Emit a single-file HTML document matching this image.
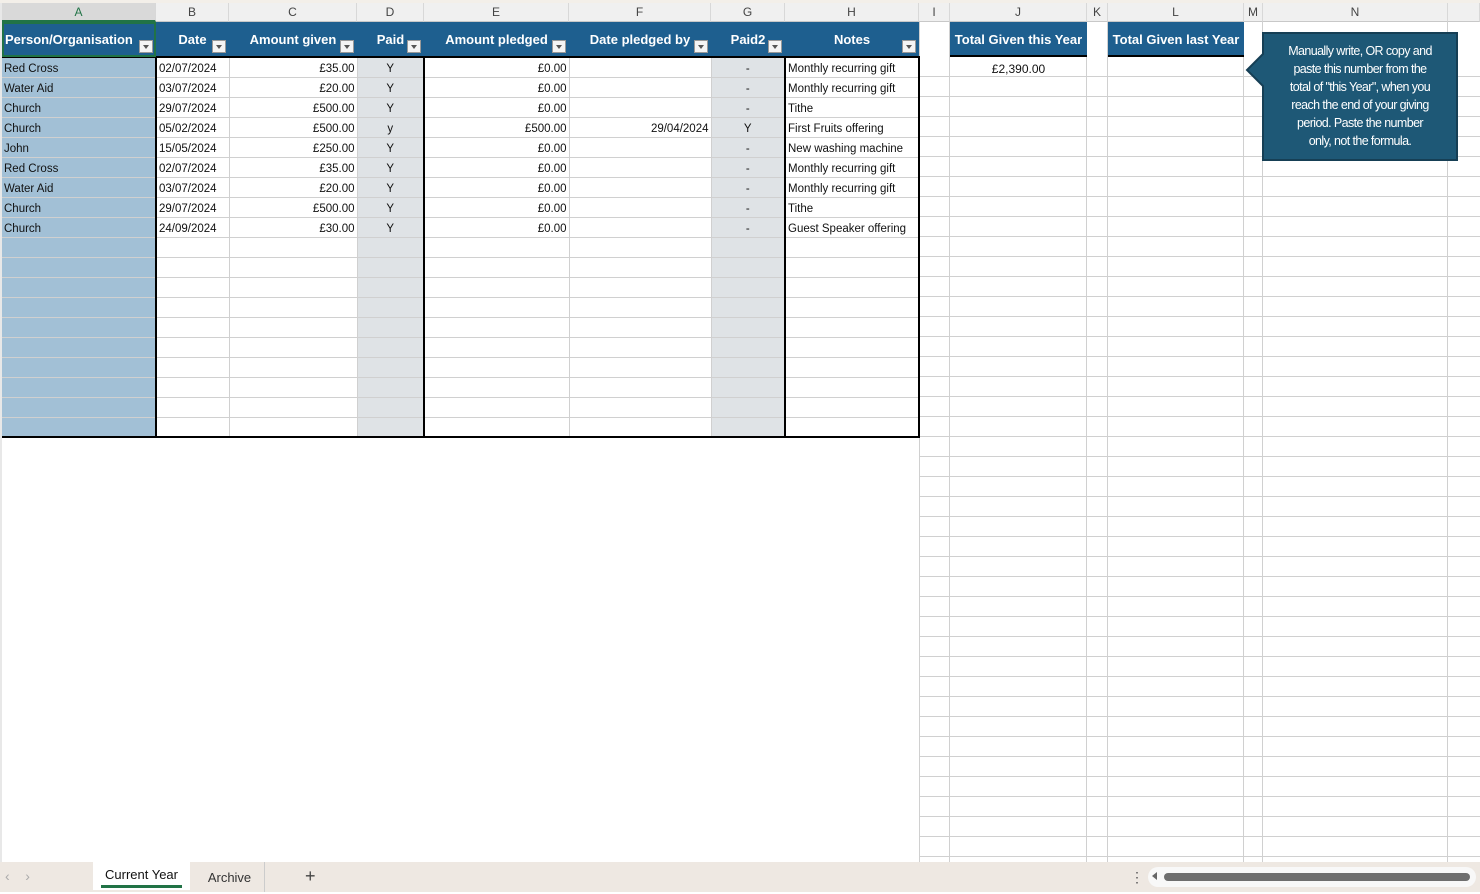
<!DOCTYPE html><html><head><style>
*{margin:0;padding:0;box-sizing:border-box}
body{width:1480px;height:892px;overflow:hidden;background:#fff;font-family:"Liberation Sans",sans-serif;position:relative}
.ab{position:absolute}
.colhdr{top:3px;height:19px;background:#f0f0f0;border-bottom:1px solid #c8c8c8;font-size:12px;color:#444;text-align:center;line-height:19px;border-right:1px solid #d8d8d8}
table{position:absolute;left:2px;top:22px;border-collapse:collapse;table-layout:fixed;font-size:11.5px;color:#111}
td{height:20px;border-bottom:1px solid #d0d0d0;border-right:1px solid #d0d0d0;padding:0 2px;white-space:nowrap;overflow:hidden;line-height:16px;vertical-align:bottom}
th{height:35px;background:#1e5f8f;color:#fff;font-size:13px;font-weight:bold;border-bottom:2px solid #000;position:relative;padding:0 18px;white-space:nowrap;text-align:center}
th i{position:absolute;right:3px;bottom:3px;width:14px;height:13px;background:#f4f4f4;border:1px solid #999}
th i:after{content:"";position:absolute;left:3px;top:4px;border:3px solid transparent;border-top:4px solid #555}
.a{background:#a2c0d6}.g{background:#dfe3e6;text-align:center}.c{text-align:center}.r{text-align:right}
.bk{border-right:2px solid #000}
</style></head><body>
<div class="ab" style="left:0;top:0;width:1480px;height:3px;background:#f3efe9"></div>
<div class="ab colhdr" style="left:2px;width:154px;background:#d9d9d9;border-bottom:2px solid #217346;color:#217346">A</div>
<div class="ab colhdr" style="left:156px;width:73px">B</div>
<div class="ab colhdr" style="left:229px;width:128px">C</div>
<div class="ab colhdr" style="left:357px;width:67px">D</div>
<div class="ab colhdr" style="left:424px;width:145px">E</div>
<div class="ab colhdr" style="left:569px;width:142px">F</div>
<div class="ab colhdr" style="left:711px;width:74px">G</div>
<div class="ab colhdr" style="left:785px;width:134px">H</div>
<div class="ab colhdr" style="left:919px;width:31px">I</div>
<div class="ab colhdr" style="left:950px;width:137px">J</div>
<div class="ab colhdr" style="left:1087px;width:21px">K</div>
<div class="ab colhdr" style="left:1108px;width:136px">L</div>
<div class="ab colhdr" style="left:1244px;width:19px">M</div>
<div class="ab colhdr" style="left:1263px;width:185px">N</div>
<div class="ab colhdr" style="left:1448px;width:32px"></div>
<div class="ab" style="left:0;top:3px;width:2px;height:860px;background:#e8e8e8"></div>
<!-- right grid -->
<div class="ab" style="left:919px;top:22px;width:1px;height:840px;background:#d0d0d0"></div>
<div class="ab" style="left:919px;top:57px;width:561px;height:805px;background:repeating-linear-gradient(180deg,transparent 0 19px,#d0d0d0 19px 20px)"></div>
<div class="ab" style="left:949px;top:22px;width:1px;height:840px;background:#d0d0d0"></div>
<div class="ab" style="left:1086px;top:22px;width:1px;height:840px;background:#d0d0d0"></div>
<div class="ab" style="left:1107px;top:22px;width:1px;height:840px;background:#d0d0d0"></div>
<div class="ab" style="left:1243px;top:22px;width:1px;height:840px;background:#d0d0d0"></div>
<div class="ab" style="left:1262px;top:22px;width:1px;height:840px;background:#d0d0d0"></div>
<div class="ab" style="left:1447px;top:22px;width:1px;height:840px;background:#d0d0d0"></div>
<div class="ab" style="left:950px;top:22px;width:137px;height:35px;background:#1e5f8f;border-bottom:2px solid #000;color:#fff;font-weight:bold;font-size:13px;text-align:center;line-height:35px">Total Given this Year</div>
<div class="ab" style="left:1108px;top:22px;width:136px;height:35px;background:#1e5f8f;border-bottom:2px solid #000;color:#fff;font-weight:bold;font-size:13px;text-align:center;line-height:35px">Total Given last Year</div>
<div class="ab" style="left:950px;top:59px;width:137px;height:20px;font-size:12px;text-align:center;line-height:20px;color:#111">£2,390.00</div>
<!-- callout -->
<svg class="ab" style="left:1244px;top:30px" width="216" height="134"><path d="M19 3H213V130H19V56L3 40L19 24Z" fill="#1e5876" stroke="#163f55" stroke-width="2"/></svg>
<div class="ab" style="left:1266px;top:42px;width:188px;color:#fff;font-size:12.5px;line-height:18px;text-align:center;letter-spacing:-0.6px">Manually write, OR copy and<br>paste this number from the<br>total of "this Year", when you<br>reach the end of your giving<br>period. Paste the number<br>only, not the formula.</div>
<table>
<colgroup><col style="width:154px"><col style="width:73px"><col style="width:128px"><col style="width:67px"><col style="width:145px"><col style="width:142px"><col style="width:74px"><col style="width:134px"></colgroup>
<tr><th style="text-align:left;padding-left:3px;outline:2px solid #217346;outline-offset:-2px">Person/Organisation<i></i></th><th>Date<i></i></th><th>Amount given<i></i></th><th>Paid<i></i></th><th>Amount pledged<i></i></th><th>Date pledged by<i></i></th><th>Paid2<i></i></th><th>Notes<i></i></th></tr>
<tr><td class="a bk">Red Cross</td><td>02/07/2024</td><td class="r">£35.00</td><td class="g bk">Y</td><td class="r">£0.00</td><td></td><td class="g bk">-</td><td class="bk">Monthly recurring gift</td></tr>
<tr><td class="a bk">Water Aid</td><td>03/07/2024</td><td class="r">£20.00</td><td class="g bk">Y</td><td class="r">£0.00</td><td></td><td class="g bk">-</td><td class="bk">Monthly recurring gift</td></tr>
<tr><td class="a bk">Church</td><td>29/07/2024</td><td class="r">£500.00</td><td class="g bk">Y</td><td class="r">£0.00</td><td></td><td class="g bk">-</td><td class="bk">Tithe</td></tr>
<tr><td class="a bk">Church</td><td>05/02/2024</td><td class="r">£500.00</td><td class="g bk">y</td><td class="r">£500.00</td><td class="r">29/04/2024</td><td class="g bk">Y</td><td class="bk">First Fruits offering</td></tr>
<tr><td class="a bk">John</td><td>15/05/2024</td><td class="r">£250.00</td><td class="g bk">Y</td><td class="r">£0.00</td><td></td><td class="g bk">-</td><td class="bk">New washing machine</td></tr>
<tr><td class="a bk">Red Cross</td><td>02/07/2024</td><td class="r">£35.00</td><td class="g bk">Y</td><td class="r">£0.00</td><td></td><td class="g bk">-</td><td class="bk">Monthly recurring gift</td></tr>
<tr><td class="a bk">Water Aid</td><td>03/07/2024</td><td class="r">£20.00</td><td class="g bk">Y</td><td class="r">£0.00</td><td></td><td class="g bk">-</td><td class="bk">Monthly recurring gift</td></tr>
<tr><td class="a bk">Church</td><td>29/07/2024</td><td class="r">£500.00</td><td class="g bk">Y</td><td class="r">£0.00</td><td></td><td class="g bk">-</td><td class="bk">Tithe</td></tr>
<tr><td class="a bk">Church</td><td>24/09/2024</td><td class="r">£30.00</td><td class="g bk">Y</td><td class="r">£0.00</td><td></td><td class="g bk">-</td><td class="bk">Guest Speaker offering</td></tr>
<tr><td class="a bk"></td><td></td><td></td><td class="g bk"></td><td></td><td></td><td class="g bk"></td><td class="bk"></td></tr>
<tr><td class="a bk"></td><td></td><td></td><td class="g bk"></td><td></td><td></td><td class="g bk"></td><td class="bk"></td></tr>
<tr><td class="a bk"></td><td></td><td></td><td class="g bk"></td><td></td><td></td><td class="g bk"></td><td class="bk"></td></tr>
<tr><td class="a bk"></td><td></td><td></td><td class="g bk"></td><td></td><td></td><td class="g bk"></td><td class="bk"></td></tr>
<tr><td class="a bk"></td><td></td><td></td><td class="g bk"></td><td></td><td></td><td class="g bk"></td><td class="bk"></td></tr>
<tr><td class="a bk"></td><td></td><td></td><td class="g bk"></td><td></td><td></td><td class="g bk"></td><td class="bk"></td></tr>
<tr><td class="a bk"></td><td></td><td></td><td class="g bk"></td><td></td><td></td><td class="g bk"></td><td class="bk"></td></tr>
<tr><td class="a bk"></td><td></td><td></td><td class="g bk"></td><td></td><td></td><td class="g bk"></td><td class="bk"></td></tr>
<tr><td class="a bk"></td><td></td><td></td><td class="g bk"></td><td></td><td></td><td class="g bk"></td><td class="bk"></td></tr>
<tr style="border-bottom:2px solid #000"><td class="a bk"></td><td></td><td></td><td class="g bk"></td><td></td><td></td><td class="g bk"></td><td class="bk"></td></tr>
</table>
<!-- tab bar -->
<div class="ab" style="left:0;top:862px;width:1480px;height:30px;background:#eee8e2"></div>
<div class="ab" style="left:5px;top:868px;font-size:14px;color:#aaa">&#8249;&nbsp;&nbsp;&nbsp;&nbsp;&#8250;</div>
<div class="ab" style="left:93px;top:862px;width:97px;height:28px;background:#fff;font-size:13px;text-align:center;line-height:26px;color:#111">Current Year<div style="position:absolute;left:8px;right:8px;bottom:2px;height:3px;background:#217346"></div></div>
<div class="ab" style="left:195px;top:862px;width:70px;height:30px;font-size:13px;text-align:center;line-height:32px;color:#333;border-right:1px solid #ccc">Archive</div>
<div class="ab" style="left:305px;top:866px;font-size:18px;color:#444">+</div>
<div class="ab" style="left:1130px;top:869px;font-size:14px;color:#555">&#8942;</div>
<div class="ab" style="left:1148px;top:867px;width:328px;height:20px;background:#f8f8f8;border-radius:10px"></div>
<div class="ab" style="left:1152px;top:872px;border:4px solid transparent;border-right:5px solid #666;border-left:0"></div>
<div class="ab" style="left:1164px;top:873px;width:306px;height:8px;background:#6e6e6e;border-radius:4px"></div>
</body></html>
